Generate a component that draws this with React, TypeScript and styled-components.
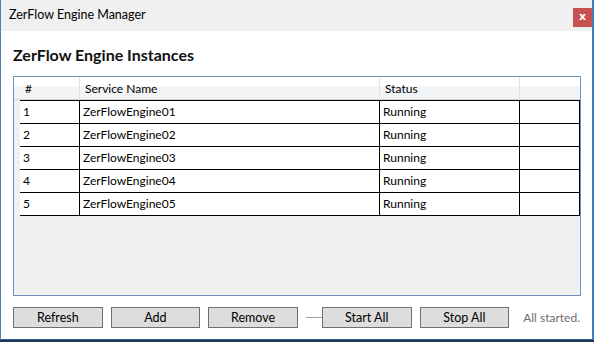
import { FC } from 'react';
import styled, { createGlobalStyle } from 'styled-components';

const GlobalStyle = createGlobalStyle`
  html, body {
    margin: 0;
    padding: 0;
    background: #1f3550;
  }
  * {
    box-sizing: border-box;
  }
`;

const FONT = `Lato, 'Open Sans', sans-serif`;

const Window = styled.div`
  width: 594px;
  height: 340px;
  display: flex;
  flex-direction: column;
  background: #ffffff;
  border-left: 1px solid #4d7fb8;
  border-right: 2px solid #3f7bbf;
  border-bottom: 1px solid #2d5f99;
  font-family: ${FONT};
  font-size: 12px;
  color: #000;
`;

const TitleBar = styled.div`
  height: 31px;
  flex-shrink: 0;
  display: flex;
  align-items: flex-start;
  justify-content: space-between;
  background: #f0f0f0;
  padding-left: 8px;
`;

const TitleText = styled.div`
  margin-top: 7px;
  font-size: 12.5px;
  line-height: 16px;
  color: #000;
`;

const CloseButton = styled.div`
  width: 19px;
  height: 19px;
  margin-top: 8px;
  background: #c75050;
  color: #fff;
  font-weight: 700;
  font-size: 11px;
  line-height: 17px;
  text-align: center;
  font-family: 'DejaVu Sans', sans-serif;
`;

const Content = styled.div`
  flex: 1;
  display: flex;
  flex-direction: column;
  padding: 0 12px;
`;

const Heading = styled.h1`
  margin: 13px 0 10px 0;
  font-size: 16px;
  line-height: 22px;
  font-weight: 700;
  color: #111;
`;

const Grid = styled.div`
  width: 568px;
  height: 220px;
  border: 1px solid #6f93bf;
  background: #f0f0f0;
  display: flex;
  flex-direction: column;
`;

const HeaderRow = styled.div`
  height: 23px;
  display: flex;
  background: linear-gradient(#ffffff 0%, #ffffff 40%, #f3f4f6 45%, #f1f2f4 100%);
  border-bottom: 1px solid #d5d5d5;
`;

const RowHeaderSpacer = styled.div`
  width: 6px;
  flex-shrink: 0;
`;

const HeaderCell = styled.div<{ w: number; last?: boolean }>`
  width: ${(p) => p.w}px;
  flex-shrink: 0;
  padding: 3px 0 0 5px;
  line-height: 18px;
  border-right: ${(p) => (p.last ? 'none' : '1px solid #e2e3e5')};
  white-space: nowrap;
`;

const Body = styled.div`
  display: flex;
  flex-direction: column;
  padding-left: 6px;
`;

const Row = styled.div<{ first?: boolean }>`
  display: flex;
  height: ${(p) => (p.first ? 24 : 23)}px;
  background: #fff;
  border-top: ${(p) => (p.first ? '1px solid #000' : 'none')};
  border-bottom: 1px solid #000;
`;

const Cell = styled.div<{ w: number }>`
  width: ${(p) => p.w}px;
  flex-shrink: 0;
  padding-left: 3px;
  line-height: 21px;
  border-right: 1px solid #000;
  white-space: nowrap;
`;

const ButtonBar = styled.div`
  margin-top: 11px;
  display: flex;
  align-items: center;
`;

const Button = styled.button<{ gapAfter?: number }>`
  width: 90px;
  height: 21px;
  margin-right: ${(p) => p.gapAfter ?? 8}px;
  padding: 0;
  background: #dddddd;
  border: 1px solid #707070;
  font-family: ${FONT};
  font-size: 12.5px;
  line-height: 18px;
  color: #000;
`;

const Separator = styled.div`
  width: 16px;
  height: 1px;
  background: #a0a0a0;
`;

const StatusText = styled.div`
  margin-left: 14px;
  color: #6d6d6d;
  font-size: 12px;
  white-space: nowrap;
`;

const columns = [
  { label: '#', w: 60 },
  { label: 'Service Name', w: 300 },
  { label: 'Status', w: 140 },
  { label: '', w: 60 },
];

const engines = [1, 2, 3, 4, 5].map((n) => ({
  id: n,
  name: `ZerFlowEngine0${n}`,
  status: 'Running',
}));

const App: FC = () => {
  return (
    <>
      <GlobalStyle />
      <Window>
        <TitleBar>
          <TitleText>ZerFlow Engine Manager</TitleText>
          <CloseButton>x</CloseButton>
        </TitleBar>
        <Content>
          <Heading>ZerFlow Engine Instances</Heading>
          <Grid>
            <HeaderRow>
              <RowHeaderSpacer />
              {columns.map((c, i) => (
                <HeaderCell key={i} w={c.w} last={i === columns.length - 1}>
                  {c.label}
                </HeaderCell>
              ))}
            </HeaderRow>
            <Body>
              {engines.map((e, i) => (
                <Row key={e.id} first={i === 0}>
                  <Cell w={60}>{e.id}</Cell>
                  <Cell w={300}>{e.name}</Cell>
                  <Cell w={140}>{e.status}</Cell>
                  <Cell w={60} />
                </Row>
              ))}
            </Body>
          </Grid>
          <ButtonBar>
            <Button>Refresh</Button>
            <Button>Add</Button>
            <Button>Remove</Button>
            <Separator />
            <Button>Start All</Button>
            <Button gapAfter={0}>Stop All</Button>
            <StatusText>All started.</StatusText>
          </ButtonBar>
        </Content>
      </Window>
    </>
  );
};

export default App;
